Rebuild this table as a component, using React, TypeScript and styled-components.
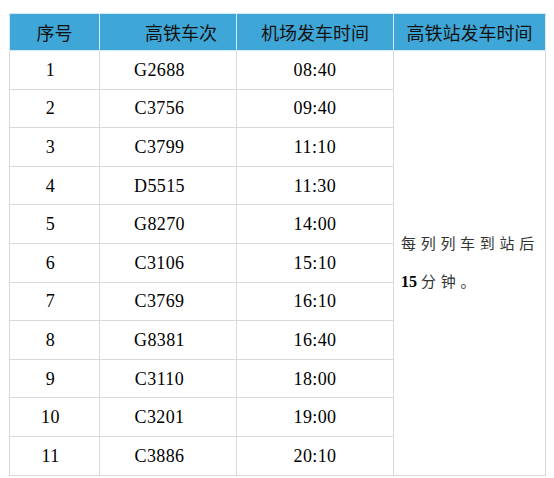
import styled, { createGlobalStyle } from "styled-components";

const GlobalStyle = createGlobalStyle`
  html, body {
    margin: 0;
    padding: 0;
    background: #ffffff;
  }
`;

const Page = styled.div`
  padding: 13px 0 0 9px;
`;

const Table = styled.table`
  border-collapse: collapse;
  table-layout: fixed;
  width: 536px;
  border: 1px solid #d9d9d9;
`;

const Col = styled.col<{ $w: number }>`
  width: ${(p) => p.$w}px;
`;

const HeadCell = styled.th<{ $shift?: number }>`
  height: 36px;
  padding: 0 0 0 ${(p) => p.$shift ?? 0}px;
  background: #3fa7d7;
  border: 1px solid #d3e9f4;
  color: #111;
  font-family: "Noto Sans CJK SC", "Noto Sans", sans-serif;
  font-size: 18px;
  font-weight: 400;
  text-align: center;
  vertical-align: middle;
  line-height: 1;
  white-space: nowrap;
  overflow: hidden;
`;

const Row = styled.tr`
  height: 38.6px;
`;

const Cell = styled.td<{ $right?: number }>`
  padding: 0 ${(p) => p.$right ?? 0}px 0 0;
  border: 1px solid #d9d9d9;
  color: #000;
  font-family: "Liberation Serif", "Times New Roman", serif;
  font-size: 18px;
  letter-spacing: 0.4px;
  text-align: center;
  vertical-align: middle;
  line-height: 1;
`;

const NoteCell = styled.td`
  padding: 0 0 0 7px;
  border: 1px solid #d9d9d9;
  vertical-align: middle;
  text-align: left;
  overflow: hidden;
`;

const NoteLine = styled.div`
  font-family: "Liberation Serif", "Noto Sans CJK SC", serif;
  font-size: 15px;
  letter-spacing: 4.7px;
  line-height: 38px;
  color: #333;
  white-space: nowrap;
`;

const Num = styled.span`
  color: #000;
  font-size: 16px;
  letter-spacing: 0;
  font-weight: 700;
  margin-right: 4px;
`;

const rows = [
  ["1", "G2688", "08:40"],
  ["2", "C3756", "09:40"],
  ["3", "C3799", "11:10"],
  ["4", "D5515", "11:30"],
  ["5", "G8270", "14:00"],
  ["6", "C3106", "15:10"],
  ["7", "C3769", "16:10"],
  ["8", "G8381", "16:40"],
  ["9", "C3110", "18:00"],
  ["10", "C3201", "19:00"],
  ["11", "C3886", "20:10"],
];

const App = () => {
  return (
    <Page>
      <GlobalStyle />
      <Table>
        <colgroup>
          <Col $w={90} />
          <Col $w={137} />
          <Col $w={157} />
          <Col $w={152} />
        </colgroup>
        <thead>
          <tr>
            <HeadCell>序号</HeadCell>
            <HeadCell $shift={26}>高铁车次</HeadCell>
            <HeadCell>机场发车时间</HeadCell>
            <HeadCell>高铁站发车时间</HeadCell>
          </tr>
        </thead>
        <tbody>
          {rows.map(([no, train, time], i) => (
            <Row key={no}>
              <Cell $right={8}>{no}</Cell>
              <Cell $right={17}>{train}</Cell>
              <Cell>{time}</Cell>
              {i === 0 && (
                <NoteCell rowSpan={rows.length}>
                  <NoteLine>每列列车到站后</NoteLine>
                  <NoteLine>
                    <Num>15</Num>分钟。
                  </NoteLine>
                </NoteCell>
              )}
            </Row>
          ))}
        </tbody>
      </Table>
    </Page>
  );
};

export default App;
